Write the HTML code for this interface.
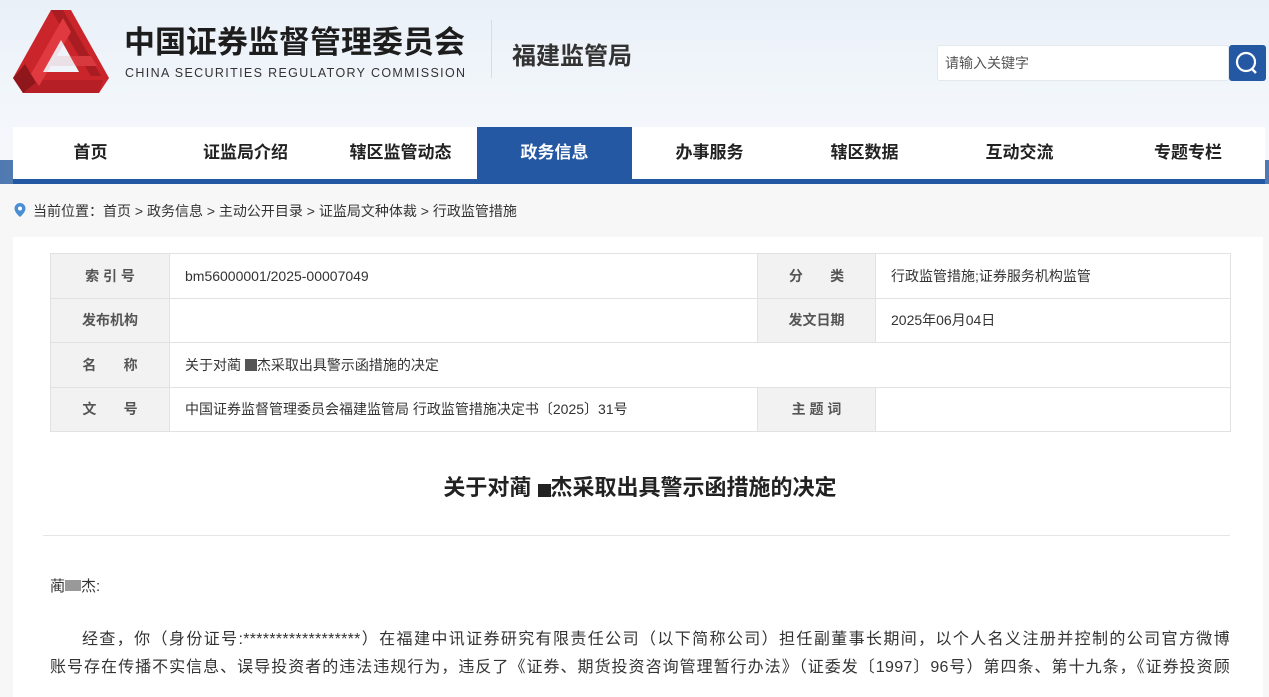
<!DOCTYPE html>
<html><head><meta charset="utf-8"><style>
*{margin:0;padding:0;box-sizing:border-box}
body{width:1269px;height:692px;overflow:hidden;background:#f7f7f7;font-family:"Liberation Sans","Noto Sans CJK SC",sans-serif;color:#333;position:relative}
.hdr{position:absolute;left:0;top:0;width:1269px;height:184px;background:linear-gradient(180deg,#e9f0f8 0%,#f3f7fb 60%,#f5f8fb 100%)}
.band{position:absolute;left:0;top:160px;width:1269px;height:24px;background:linear-gradient(90deg,#4f79b0,#8aa7cc 40%,#4f79b0)}
.a{position:absolute;white-space:nowrap}
.nav{position:absolute;left:13px;top:127px;width:1252px;height:52px;background:#fff}
.navbar{position:absolute;left:13px;top:179px;width:1252px;height:5px;background:#2558a3}
.nav span{position:absolute;top:0;height:52px;line-height:52px;font-size:17px;font-weight:bold;color:#222;text-align:center;width:155px}
.nav .on{background:#2558a3;color:#fff}
.panel{position:absolute;left:13px;top:237px;width:1250px;height:460px;background:#fff}
table{position:absolute;left:50px;top:253px;border-collapse:collapse;font-size:14px}
td{border:1px solid #e2e2e2;height:44.5px;padding:0 15px;color:#333}
td.l{background:#f2f2f2;text-align:center;font-weight:bold;color:#555;padding:0}
.pl{position:absolute;font-size:16px;line-height:28px;color:#333;white-space:nowrap;text-align:justify;text-align-last:justify;letter-spacing:0.3px}
</style></head><body>
<div class="hdr"></div>
<div class="band"></div>
<svg class="a" style="left:13px;top:10px" width="96" height="83" viewBox="0 0 96 83">
<polygon points="38,0 58,0 96,68 86,83 10,83 0,68" fill="#c9252b"/>
<polygon points="48,30 66,62 30,62" fill="#eef3f9"/>
<polygon points="38,0 50,0 88,66 78,66" fill="#a81c22"/>
<polygon points="0,68 12,54 26,78 10,83" fill="#8f161b"/>
<polygon points="26,70 90,70 86,83 10,83" fill="#b71f26"/>
<polygon points="32,46 78,46 84,56 38,56" fill="#d8393e"/>
<polygon points="50,8 58,22 26,76 18,64" fill="#e03a40"/>
<polygon points="48,30 66,62 30,62" fill="#eef3f9" opacity="0.9"/>
</svg>
<div class="a" style="left:124px;top:17px;font-size:31px;font-weight:bold;color:#1d1d1d">中国证券监督管理委员会</div>
<div class="a" style="left:125px;top:66px;font-size:12.5px;color:#333;letter-spacing:1.35px">CHINA SECURITIES REGULATORY COMMISSION</div>
<div class="a" style="left:491px;top:20px;width:1px;height:58px;background:#d8dde4"></div>
<div class="a" style="left:512px;top:36px;font-size:24px;font-weight:bold;color:#333">福建监管局</div>
<div class="a" style="left:937px;top:45px;width:292px;height:36px;background:#fff;border:1px solid #e3e8ee;border-radius:3px;font-size:14px;color:#555;line-height:34px;padding-left:7px">请输入关键字</div>
<div class="a" style="left:1229px;top:45px;width:37px;height:36px;background:#2558a3;border-radius:3px"><svg width="37" height="36"><circle cx="17" cy="17" r="9" fill="none" stroke="#fff" stroke-width="2.2"/><line x1="23" y1="24" x2="27" y2="28" stroke="#fff" stroke-width="2.4"/></svg></div>
<div class="nav">
<span style="left:0">首页</span><span style="left:155px">证监局介绍</span><span style="left:310px">辖区监管动态</span><span class="on" style="left:464px">政务信息</span><span style="left:619px">办事服务</span><span style="left:774px">辖区数据</span><span style="left:929px">互动交流</span><span style="left:1110px;width:130px">专题专栏</span>
</div>
<div class="navbar"></div>
<svg class="a" style="left:13px;top:202px" width="14" height="16"><path d="M7 1a5.5 5.5 0 0 0-5.5 5.5C1.5 10.5 7 15 7 15s5.5-4.5 5.5-8.5A5.5 5.5 0 0 0 7 1z" fill="#4a8fd6"/><circle cx="7" cy="6.5" r="2" fill="#fff"/></svg>
<div class="a" style="left:33px;top:201px;font-size:14px;color:#333">当前位置：首页 &gt; 政务信息 &gt; 主动公开目录 &gt; 证监局文种体裁 &gt; 行政监管措施</div>
<div class="panel"></div>
<table>
<tr><td class="l" style="width:119px">索 引 号</td><td style="width:588px">bm56000001/2025-00007049</td><td class="l" style="width:118px">分&nbsp;&nbsp;&nbsp;&nbsp;&nbsp;&nbsp;&nbsp;类</td><td style="width:355px">行政监管措施;证券服务机构监管</td></tr>
<tr><td class="l">发布机构</td><td></td><td class="l">发文日期</td><td>2025年06月04日</td></tr>
<tr><td class="l">名&nbsp;&nbsp;&nbsp;&nbsp;&nbsp;&nbsp;&nbsp;称</td><td colspan="3">关于对蔺 <span style="display:inline-block;width:12px;height:12px;background:#555;vertical-align:-1px"></span>杰采取出具警示函措施的决定</td></tr>
<tr><td class="l">文&nbsp;&nbsp;&nbsp;&nbsp;&nbsp;&nbsp;&nbsp;号</td><td>中国证券监督管理委员会福建监管局 行政监管措施决定书〔2025〕31号</td><td class="l">主 题 词</td><td></td></tr>
</table>
<div class="a" style="left:0;width:1280px;text-align:center;top:470px;font-size:22px;font-weight:bold;color:#222">关于对蔺 <span style="display:inline-block;width:13px;height:13px;background:#222;vertical-align:-2px"></span>杰采取出具警示函措施的决定</div>
<div class="a" style="left:43px;top:535px;width:1187px;height:1px;background:#e6e6e6"></div>
<div class="a" style="left:50px;top:575px;font-size:15px;color:#333">蔺<span style="display:inline-block;width:16px;height:11px;background:#999;vertical-align:0"></span>杰:</div>
<div class="pl" style="left:82px;top:626px;width:1148px">经查，你（身份证号:******************）在福建中讯证券研究有限责任公司（以下简称公司）担任副董事长期间，以个人名义注册并控制的公司官方微博</div>
<div class="pl" style="left:50px;top:654px;width:1180px">账号存在传播不实信息、误导投资者的违法违规行为，违反了《证券、期货投资咨询管理暂行办法》（证委发〔1997〕96号）第四条、第十九条，《证券投资顾</div>
</body></html>
